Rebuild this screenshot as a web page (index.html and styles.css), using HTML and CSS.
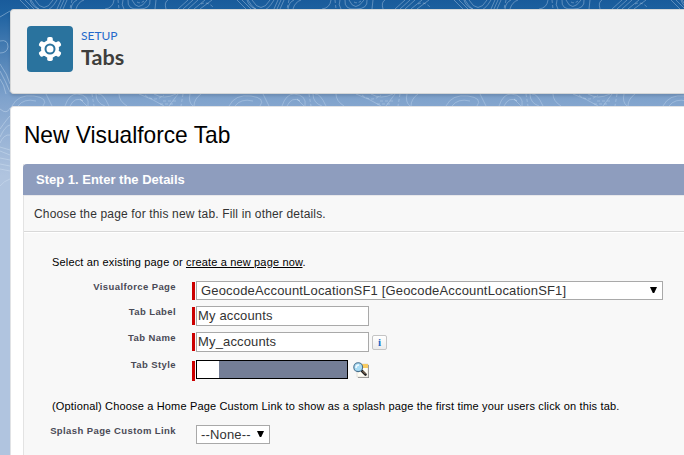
FILE: index.html
```html
<!DOCTYPE html>
<html lang="en">
<head>
<meta charset="utf-8">
<title>Tabs</title>
<link rel="stylesheet" href="styles.css">
</head>
<body>
<svg class="backdrop" width="684" height="200" viewBox="0 0 684 200" aria-hidden="true">
  <defs>
    <pattern id="contours" width="217" height="200" patternUnits="userSpaceOnUse">
      <g fill="none" stroke="#c9ddf2" stroke-opacity=".42" stroke-width=".9">
        <path d="M20 0 29 9M25 0 34 9M30 0Q32 7 39 9M35 0Q44 15 53 0M31 0Q44 22 57 0M61 0 57 9M64 0 60 9M67 0 63 9M77 0Q72 2 71 9M84 0Q78 2 76 9M105 9Q113 8 114 0M123 0Q121 5 124 9M128 0Q127 10 139 9Q151 9 150 0M132 0Q138 13 147 0M156 0 155 9M168 0Q164 2 166 9M188 0 178 9M193 0 183 9M198 0 188 9M205 0 194 9M212 0 200 9"/>
        <path stroke-dasharray="3 2" d="M72 0 70 9M118 0 119 9M137 2Q140 4 144 1M201 4Q207 1 213 7"/>
        <path d="M12 106Q18 94 34 96Q49 98 43 106M18 106Q24 98 36 101M46 94 52 106M65 106Q69 94 77 94Q90 95 88 106M70 106Q75 96 83 101L80 99 87 106M96 94Q96 103 105 106M98 94Q103 93 109 106M119 94Q119 101 127 106M139 94Q153 99 164 106M154 94Q164 100 176 94M178 94 169 106M190 94Q188 102 193 106M201 94Q194 99 194 106"/>
        <path stroke-dasharray="3 2" d="M92 94 94 106M145 95Q155 103 164 95M163 101 176 101M160 104 174 104M183 94 181 106"/>
      </g>
    </pattern>
  </defs>
  <rect width="684" height="107" fill="url(#contours)"/>
  <g fill="none" stroke="#d7e6f5" stroke-opacity=".4">
    <path d="M0 17 10 11M0 41Q8 39 8 47Q7 53 0 53M0 64Q8 75 10 84M0 71Q6 82 10 92M0 79Q4 84 6 94M0 109Q7 115 10 108M0 129Q7 119 10 116M0 137Q5 126 10 125M0 143Q4 134 10 135M0 147 10 150M0 151 10 155M0 158 10 160M0 164 10 166M0 169 10 171M0 186Q4 181 10 179"/>
  </g>
</svg>
<div class="page">
  <header class="setup-header">
    <div class="setup-icon">
      <svg width="46" height="46" viewBox="0 0 46 46" aria-hidden="true">
        <g fill="#fff">
          <circle cx="23" cy="23" r="9"/>
          <rect x="20.2" y="11" width="5.6" height="24" rx="1.8"/>
          <rect x="20.2" y="11" width="5.6" height="24" rx="1.8" transform="rotate(60 23 23)"/>
          <rect x="20.2" y="11" width="5.6" height="24" rx="1.8" transform="rotate(120 23 23)"/>
        </g>
        <circle cx="23" cy="23" r="4.5" fill="#fff" stroke="#2a739e" stroke-width="2"/>
      </svg>
    </div>
    <div class="setup-title">
      <div class="eyebrow">SETUP</div>
      <div class="name">Tabs</div>
    </div>
  </header>
  <main class="card">
    <h1>New Visualforce Tab</h1>
    <section class="step">
      <h2>Step 1. Enter the Details</h2>
      <p class="intro">Choose the page for this new tab. Fill in other details.</p>
      <div class="form">
        <p class="note">Select an existing page or <a>create a new page now</a>.</p>
        <div class="row row-page">
          <label>Visualforce Page</label><i class="required"></i>
          <div class="select wide"><span>GeocodeAccountLocationSF1 [GeocodeAccountLocationSF1]</span><b class="arrow"></b></div>
        </div>
        <div class="row row-text">
          <label>Tab Label</label><i class="required"></i>
          <div class="input">My accounts</div>
        </div>
        <div class="row row-text">
          <label>Tab Name</label><i class="required"></i>
          <div class="input">My_accounts</div>
          <span class="info">i</span>
        </div>
        <div class="row row-style">
          <label>Tab Style</label><i class="required"></i>
          <div class="swatch"></div>
          <svg class="lookup" width="17" height="17" viewBox="0 0 17 17" aria-hidden="true">
            <path d="M5 3H16V16H5Z" fill="#888"/>
            <path d="M4 2H15V15H4Z" fill="#fffdf4" stroke="#d5d2c9" stroke-width=".6"/>
            <path d="M8 2H15V6H8Z" fill="#f8cb62"/>
            <path d="M9 9 12.5 12.5" stroke="#222" stroke-width="2.6" stroke-linecap="round"/>
            <path d="M9.5 9 12.5 12" stroke="#a98567" stroke-width="1"/>
            <circle cx="5.2" cy="5.2" r="4.4" fill="#a9dcf5" stroke="#486f8d" stroke-width="1.1"/>
            <path d="M3 6Q3 3 6 3" fill="none" stroke="#effaff" stroke-width="1.5"/>
          </svg>
        </div>
        <p class="note optional">(Optional) Choose a Home Page Custom Link to show as a splash page the first time your users click on this tab.</p>
        <div class="row row-splash">
          <label>Splash Page Custom Link</label><i class="spacer"></i>
          <div class="select small"><span>--None--</span><b class="arrow"></b></div>
        </div>
      </div>
    </section>
  </main>
</div>
</body>
</html>
```
FILE: styles.css
```css
* { box-sizing: border-box; }
body {
  margin: 0;
  width: 684px;
  height: 455px;
  overflow: hidden;
  font-family: "Liberation Sans", Arial, sans-serif;
  background: linear-gradient(#195b9b 0, #1d61a0 12px, #7fa2cc 98px, #b0c4df 175px, #b0c4df 100%);
}
.backdrop { position: absolute; left: 0; top: 0; }
.page { position: relative; padding: 9px 0 0 10px; }
h1, h2, p { margin: 0; font-weight: normal; white-space: nowrap; }
.setup-header {
  display: flex;
  height: 85px;
  padding: 16px 0 0 16px;
  background: #f1f1f1;
  border: 1px solid #d4d6d7;
  border-right: 0;
  border-radius: 4px 0 0 4px;
  box-shadow: 0 2px 3px rgba(0, 0, 0, .12);
}
.setup-icon { width: 46px; height: 46px; border-radius: 4px; background: #2a739e; }
.setup-icon svg { display: block; }
.setup-title { padding: 1px 0 0 8px; font-family: Lato, sans-serif; }
.eyebrow { font-size: 12px; line-height: 17px; color: #2469cb; }
.name { font-size: 20px; line-height: 26px; font-weight: bold; transform: scaleX(1.08); transform-origin: 0 0; color: #3e3e3c; }
.card {
  height: 360px;
  margin-top: 12px;
  padding-left: 12px;
  background: #fff;
  border: 1px solid #e0e2e5;
  border-right: 0;
  border-radius: 4px 0 0 0;
}
h1 { height: 57px; padding: 14px 0 0 1px; font-size: 24px; line-height: 28px; color: #000; transform: scaleX(.947); transform-origin: 0 0; }
.step { border-left: 1px solid #e3e3e3; background: #f8f8f8; }
h2 {
  height: 31px;
  margin-left: -1px;
  padding-left: 13px;
  border-radius: 4px 0 0 0;
  background: #8e9dbe;
  color: #fff;
  font-size: 13px;
  line-height: 31px;
  font-weight: bold;
}
.intro {
  height: 37px;
  padding-left: 10px;
  border-top: 1px solid #e8e8eb;
  border-bottom: 1px solid #d9d9d9;
  font-size: 12px;
  line-height: 36px;
  letter-spacing: .16px;
  color: #333;
}
.form { height: 240px; padding-top: 21px; border-top: 1px solid #fff; }
.note { height: 16px; padding-left: 28px; font-size: 11px; line-height: 16px; letter-spacing: .16px; color: #000; }
.note a { text-decoration: underline; text-underline-offset: 1px; }
.row { display: flex; align-items: flex-start; }
.row label {
  width: 152px;
  font-size: 9.5px;
  line-height: 12px;
  font-weight: bold;
  letter-spacing: .4px;
  text-align: right;
  color: #4a4a56;
  white-space: nowrap;
}
.required { width: 3px; height: 18px; margin: 1px 1px 0 16px; background: #c00; }
.spacer { width: 20px; }
.row-page { height: 25px; margin-top: 11px; }
.row-text { height: 26px; }
.row-style { height: 38px; padding-top: 2px; }
.row-style .required { height: 20px; }
.row-style label { margin-top: -1px; }
.select {
  display: flex;
  justify-content: space-between;
  height: 19px;
  border: 1px solid #a9a9a9;
  background: #fff;
  font-size: 13px;
  line-height: 17px;
  letter-spacing: .17px;
  color: #333;
  white-space: nowrap;
}
.wide { width: 467px; padding: 0 5px 0 4px; }
.small { width: 74px; padding: 0 5px 0 4px; }
.arrow { width: 7px; height: 6px; margin-top: 5px; background: #000; clip-path: polygon(0 0, 100% 0, 60% 100%, 40% 100%); }
.input { width: 173px; height: 20px; padding-left: 1px; border: 1px solid #a9a9a9; background: #fff; font-size: 13px; line-height: 18px; letter-spacing: .15px; color: #333; }
.info {
  width: 15px;
  height: 15px;
  margin: 3px 0 0 3px;
  border: 1px solid #c4c4c4;
  border-radius: 2px;
  background: linear-gradient(#fff, #ececec);
  font: bold 11px/13px "Liberation Serif", serif;
  text-align: center;
  color: #1767c5;
}
.swatch { width: 152px; height: 19px; border: 1px solid #000; background: linear-gradient(90deg, #fff 22px, #747e96 22px); }
.lookup { margin: 2px 0 0 5px; }
.optional { margin-top: 2px; }
.row-splash { margin-top: 11px; }
```
